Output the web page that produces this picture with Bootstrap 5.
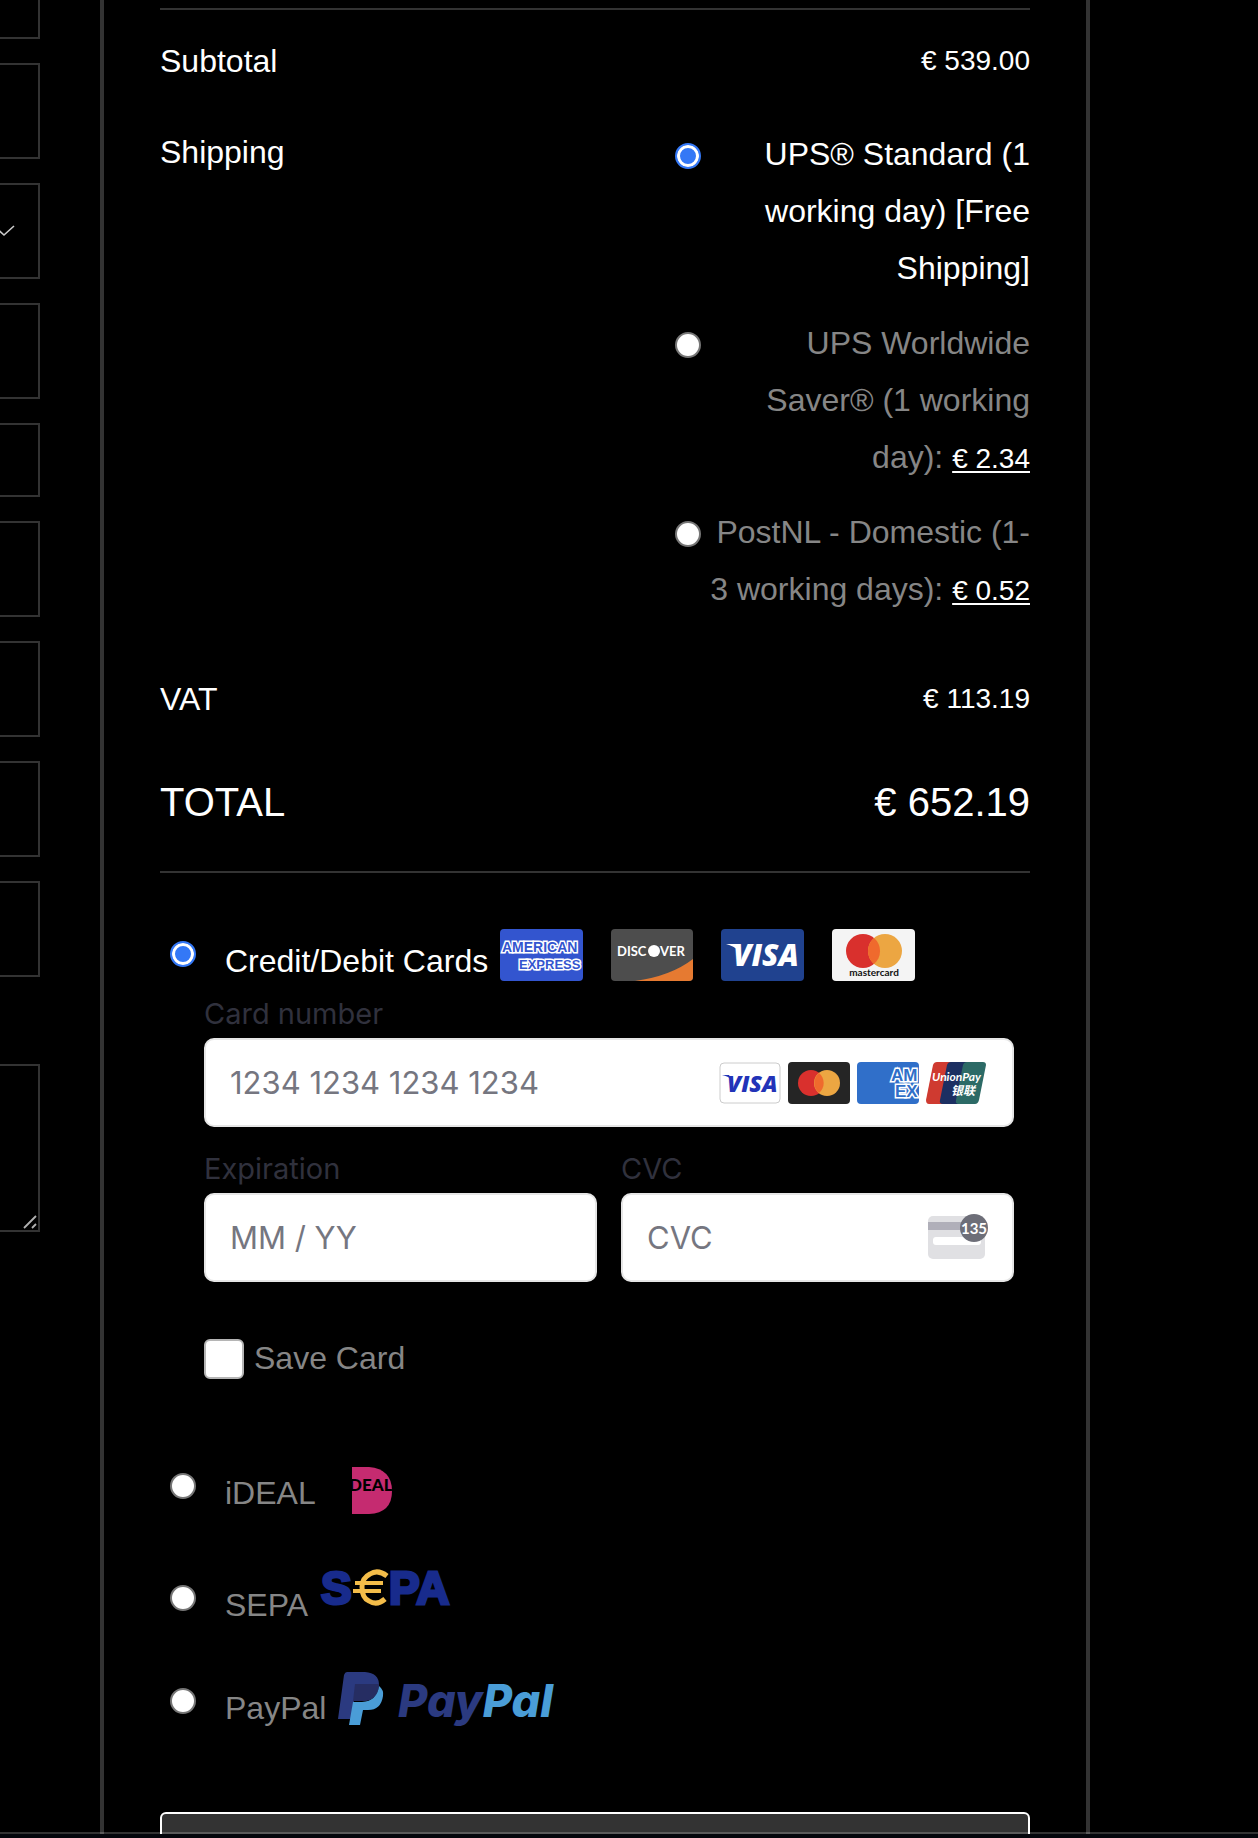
<!DOCTYPE html>
<html lang="en">
<head>
<meta charset="utf-8">
<meta name="viewport" content="width=device-width, initial-scale=1">
<title>Checkout</title>
<link rel="stylesheet" href="https://cdn.jsdelivr.net/npm/bootstrap@5.3.0/dist/css/bootstrap.min.css">
<style>
body{background:#000;color:#fff;font-family:"Liberation Sans",Arial,sans-serif;font-size:32px;line-height:58px}
.billing{width:40px;gap:24px;padding-top:0}
.billing .form-control,.billing .form-select{background:#000;border:2px solid #333;border-left:0;border-radius:0;height:96px;padding:0;color:#fff;display:block}
.billing .cut-top{height:39px;border-top:0}
.billing .short{height:74px}
.billing textarea.form-control{height:168px;resize:none}
.notes{margin-top:63px}
.chev{left:0;top:40px}
.grip{right:3px;bottom:3px}
.review{margin-left:60px;margin-right:168px;border:4px solid #333;border-top:0;border-bottom:0;padding:8px 56px 0}
.rule{height:2px;background:#333;margin:0;opacity:1;border:0}
.amount{font-size:28px}
.grand{font-size:40px}
.sub-row{padding-top:22px}
.ship-row{padding-top:33px}
.vat-row{padding-top:52px}
.total-row{padding:45px 0 40px}
.methods{width:355px;padding-top:3px;gap:18px;line-height:57px}
.methods label{width:325px;text-align:right}
.methods .form-check-input{margin-top:17px}
.dim{color:#868686}
.methods .amount{color:#fff;line-height:28px;text-decoration:underline;text-decoration-thickness:2px;text-underline-offset:3px}
.form-check-input[type=radio]{width:26px;height:26px;border:2px solid #767676;background:#fff;flex:none;margin-left:0;margin-bottom:0;margin-right:0;float:none}
.form-check-input[type=radio]:checked{background:#3478f6;border-color:#3478f6;box-shadow:inset 0 0 0 3px #fff}
.pay{padding-left:10px}
.pay .form-check-input{margin-top:16px}
.pay label{margin:7px 12px 0 29px;white-space:nowrap}
.pay svg{flex:none}
.pay-card{margin-top:52px}
.pay-ideal{margin-top:78px}
.pay-sepa{margin-top:47px}
.pay-paypal{margin-top:38px}
.brands{gap:28px;margin-top:4px}
.ideal-logo{margin:10px 0 0 24px}
.card-form{padding:6px 16px 0 44px}
.card-form .form-label{font:29px/36px Inter,sans-serif;color:#30313d;margin:0 0 6px;display:block}
.card-form .form-control{height:89px;border:2px solid #e6e6e6;border-radius:10px;background:#fff;color:#30313d;font:31px/40px Inter,sans-serif;padding:0 24px}
.card-form .form-control::placeholder{color:#757680;opacity:1}
.narrow-row{gap:24px;margin-top:24px}
.in-field{right:28px;top:24px;gap:7px}
.in-cvc{right:26px;top:21px}
.save{margin-top:57px;line-height:38px;gap:10px}
.save .form-check-input{width:40px;height:40px;margin:0;border:2px solid #b5b5b5;border-radius:6px;background-color:#fff;flex:none}
.place{margin-top:75px;height:96px;background:#333;border:2px solid #fff;border-radius:6px}
.edge{height:6px;background:#04060c;background-clip:padding-box;border-top:2px solid rgba(255,255,255,.2)}
svg{display:block}
svg text{font-family:"Liberation Sans",Arial,sans-serif}
svg .t-lato{font-family:Lato,sans-serif}
svg .t-open{font-family:"Open Sans",sans-serif}
svg .t-inter{font-family:Inter,sans-serif}
svg .t-cjk{font-family:"Noto Sans CJK SC",sans-serif}
</style>
<script src="https://cdn.jsdelivr.net/npm/bootstrap@5.3.0/dist/js/bootstrap.bundle.min.js"></script>
</head>
<body>
<div class="d-flex vh-100 overflow-hidden">
  <form class="billing d-flex flex-column flex-shrink-0" aria-label="Billing details">
    <input class="form-control cut-top" aria-label="First name">
    <input class="form-control" aria-label="Company">
    <div class="position-relative">
      <select class="form-select" aria-label="Country"><option></option></select>
      <svg class="chev position-absolute pe-none" width="15" height="14"><path d="M-6 3L4 12L14 3" fill="none" stroke="#ccc" stroke-width="1.6"/></svg>
    </div>
    <input class="form-control" aria-label="Street">
    <input class="form-control short" aria-label="Apartment">
    <input class="form-control" aria-label="Postcode">
    <input class="form-control" aria-label="City">
    <input class="form-control" aria-label="Phone">
    <input class="form-control" aria-label="Email">
    <div class="position-relative notes">
      <textarea class="form-control" aria-label="Order notes"></textarea>
      <svg class="grip position-absolute pe-none" width="14" height="14"><path d="M1 13L13 1M9 13L13 9" fill="none" stroke="#b0b0b0" stroke-width="1.8"/></svg>
    </div>
  </form>

  <main class="review flex-grow-1">
    <hr class="rule">
    <div class="sub-row d-flex justify-content-between"><span>Subtotal</span><span class="amount">€ 539.00</span></div>
    <div class="ship-row d-flex justify-content-between">
      <span>Shipping</span>
      <div class="methods d-flex flex-column">
        <div class="d-flex justify-content-between">
          <input class="form-check-input" type="radio" name="ship" id="s1" checked>
          <label for="s1">UPS® Standard (1 working day) [Free Shipping]</label>
        </div>
        <div class="d-flex justify-content-between">
          <input class="form-check-input" type="radio" name="ship" id="s2">
          <label for="s2" class="dim">UPS Worldwide Saver® (1 working day): <span class="amount">€&nbsp;2.34</span></label>
        </div>
        <div class="d-flex justify-content-between">
          <input class="form-check-input" type="radio" name="ship" id="s3">
          <label for="s3" class="dim">PostNL - Domestic (1-<wbr>3 working days): <span class="amount">€&nbsp;0.52</span></label>
        </div>
      </div>
    </div>
    <div class="vat-row d-flex justify-content-between"><span>VAT</span><span class="amount">€ 113.19</span></div>
    <div class="total-row grand d-flex justify-content-between"><span>TOTAL</span><span>€ 652.19</span></div>
    <hr class="rule">

    <div class="pay pay-card d-flex align-items-start">
      <input class="form-check-input" type="radio" name="pay" id="p1" checked>
      <label for="p1">Credit/Debit Cards</label>
      <div class="brands d-flex">
        <svg width="83" height="52" viewBox="0 0 83 52" role="img" aria-label="American Express">
          <rect width="83" height="52" rx="4" fill="#3355cf"/>
          <g font-weight="700" fill="#3355cf" stroke="#fff" stroke-width="3" paint-order="stroke">
          <text x="2" y="23" font-size="14">AMERICAN</text><text x="19" y="40" font-size="13">EXPRESS</text></g>
        </svg>
        <svg width="82" height="52" viewBox="0 0 82 52" role="img" aria-label="Discover">
          <defs><clipPath id="dc"><rect width="82" height="52" rx="4"/></clipPath></defs>
          <g clip-path="url(#dc)"><rect width="82" height="52" fill="#4d4d4d"/><path d="M24 52Q60 47 82 30V52Z" fill="#e67a31"/>
          <g fill="#fff" font-weight="700" font-size="13"><text x="6" y="27" class="t-lato">DISC</text><text x="49" y="27" class="t-lato">VER</text></g><circle cx="43" cy="22" r="6" fill="#fff"/></g>
        </svg>
        <svg width="83" height="52" viewBox="0 0 83 52" role="img" aria-label="Visa">
          <rect width="83" height="52" rx="4" fill="#20428f"/><path d="M5 15H15L18 22Q13 17 5 15Z" fill="#fff"/>
          <text x="12" y="37" fill="#fff" font-size="30" font-weight="800" font-style="italic" class="t-open">VISA</text>
        </svg>
        <svg width="83" height="52" viewBox="0 0 83 52" role="img" aria-label="Mastercard">
          <rect width="83" height="52" rx="4" fill="#f4f4f4"/><circle cx="31" cy="22" r="17" fill="#d9302d"/><circle cx="53" cy="22" r="17" fill="#eca642"/><path d="M42 9A17 17 0 0 1 42 35A17 17 0 0 1 42 9Z" fill="#ef6a2d"/>
          <text x="42" y="47" text-anchor="middle" font-size="10" font-weight="700" fill="#111" class="t-lato">mastercard</text>
        </svg>
      </div>
    </div>

    <div class="card-form">
      <label class="form-label" for="num">Card number</label>
      <div class="position-relative">
        <input class="form-control" id="num" placeholder="1234 1234 1234 1234">
        <div class="in-field position-absolute d-flex pe-none">
          <svg width="62" height="42" viewBox="0 0 62 42"><rect x="1" y="1" width="60" height="40" rx="4" fill="#fff" stroke="#ccc"/><path d="M3 13H10L13 18Q9 14 3 13Z" fill="#2233b8"/><text x="8" y="30" fill="#2233b8" font-size="23" font-weight="800" font-style="italic" class="t-open">VISA</text></svg>
          <svg width="62" height="42" viewBox="0 0 62 42"><rect width="62" height="42" rx="4" fill="#252525"/><circle cx="23" cy="21" r="13" fill="#d9302d"/><circle cx="39" cy="21" r="13" fill="#eca642"/><path d="M31 11A13 13 0 0 1 31 31A13 13 0 0 1 31 11Z" fill="#ef6a2d"/></svg>
          <svg width="62" height="42" viewBox="0 0 62 42"><rect width="62" height="42" rx="4" fill="#306fc9"/><g font-weight="700" font-size="17" fill="#306fc9" stroke="#fff" stroke-width="3" paint-order="stroke"><text x="34" y="19">AM</text><text x="38" y="35">EX</text></g></svg>
          <svg width="60" height="42" viewBox="0 0 60 42"><path d="M11 0H26L17 42H3Q0 42 0 38L7 3Q8 0 11 0Z" fill="#cf3a30"/><path d="M25 0H42L34 42H17Q13 42 14 38L21 3Q22 0 25 0Z" fill="#1c2f62"/><path d="M41 0H57Q60 0 60 3L53 38Q52 42 49 42H33Q29 42 30 38L37 3Q38 0 41 0Z" fill="#2c6a66"/><text x="6" y="19" fill="#fff" font-size="12" font-weight="700" font-style="italic" class="t-lato">UnionPay</text><text x="25" y="33" fill="#fff" font-size="12" font-weight="700" font-style="italic" class="t-cjk">银联</text></svg>
        </div>
      </div>
      <div class="narrow-row d-flex">
        <div class="flex-fill w-50">
          <label class="form-label" for="exp">Expiration</label>
          <input class="form-control" id="exp" placeholder="MM / YY">
        </div>
        <div class="flex-fill w-50">
          <label class="form-label" for="cvc">CVC</label>
          <div class="position-relative">
            <input class="form-control" id="cvc" placeholder="CVC">
            <svg class="in-cvc position-absolute pe-none" width="60" height="45" viewBox="0 0 60 45"><rect y="2" width="57" height="43" rx="5" fill="#e0e0e3"/><rect y="8" width="57" height="8" fill="#b0afb9"/><rect x="5" y="23" width="48" height="8" rx="3" fill="#fff"/><circle cx="46" cy="14" r="14" fill="#6d6e78"/><text x="46" y="20" text-anchor="middle" fill="#fff" font-size="15" font-weight="700" class="t-lato">135</text></svg>
          </div>
        </div>
      </div>
      <div class="save d-flex">
        <input class="form-check-input" type="checkbox" id="save">
        <label for="save" class="dim">Save Card</label>
      </div>
    </div>

    <div class="pay pay-ideal d-flex align-items-start">
      <input class="form-check-input" type="radio" name="pay" id="p2">
      <label for="p2" class="dim">iDEAL</label>
      <svg class="ideal-logo" width="40" height="47" viewBox="0 0 40 47" role="img" aria-label="iDEAL"><defs><clipPath id="idc"><path d="M0 0H17Q40 2 40 24T17 47H0Z"/></clipPath></defs><path d="M0 0H17Q40 2 40 24T17 47H0Z" fill="#c52b70"/><g clip-path="url(#idc)"><text x="-3" y="24" font-size="17" font-weight="900" fill="#000" class="t-lato">DEAL</text></g></svg>
    </div>
    <div class="pay pay-sepa d-flex align-items-start">
      <input class="form-check-input" type="radio" name="pay" id="p3">
      <label for="p3" class="dim">SEPA</label>
      <svg width="134" height="38" viewBox="0 0 134 38" role="img" aria-label="SEPA"><g font-weight="700" font-size="46" fill="#182b8c" stroke="#182b8c" stroke-width="3"><text x="1" y="35">S</text><text x="69" y="35">PA</text></g>
      <g fill="none" stroke="#f4bd49" stroke-width="5"><path d="M67 7Q58 0 50 5Q42 9 42 18Q42 29 49 32Q57 37 65 30"/><path d="M35 14H63M33 22H61" stroke-width="4"/></g></svg>
    </div>
    <div class="pay pay-paypal d-flex align-items-start">
      <input class="form-check-input" type="radio" name="pay" id="p4">
      <label for="p4" class="dim">PayPal</label>
      <svg width="224" height="56" viewBox="0 0 224 56" role="img" aria-label="PayPal">
        <path d="M9 0H27Q41 1 41 13Q40 29 24 29H16L13 47H0L6 3Q7 0 9 0Z" fill="#2b3a80"/>
        <path d="M41 14Q46 18 45 24Q43 38 30 38H25L22 53H11L15 30H24Q39 29 41 14Z" fill="#4a9dd7"/>
        <path d="M17 12H41Q40 29 24 29H15Z" fill="#262d62"/>
        <text x="60" y="45" font-size="45" font-weight="800" font-style="italic" fill="#2b3a80" class="t-inter">Pay<tspan fill="#4a9dd7">Pal</tspan></text>
      </svg>
    </div>
    <button class="place btn w-100 d-block" type="submit" aria-label="Place order"></button>
  </main>
</div>
<div class="edge fixed-bottom"></div>
</body>
</html>
